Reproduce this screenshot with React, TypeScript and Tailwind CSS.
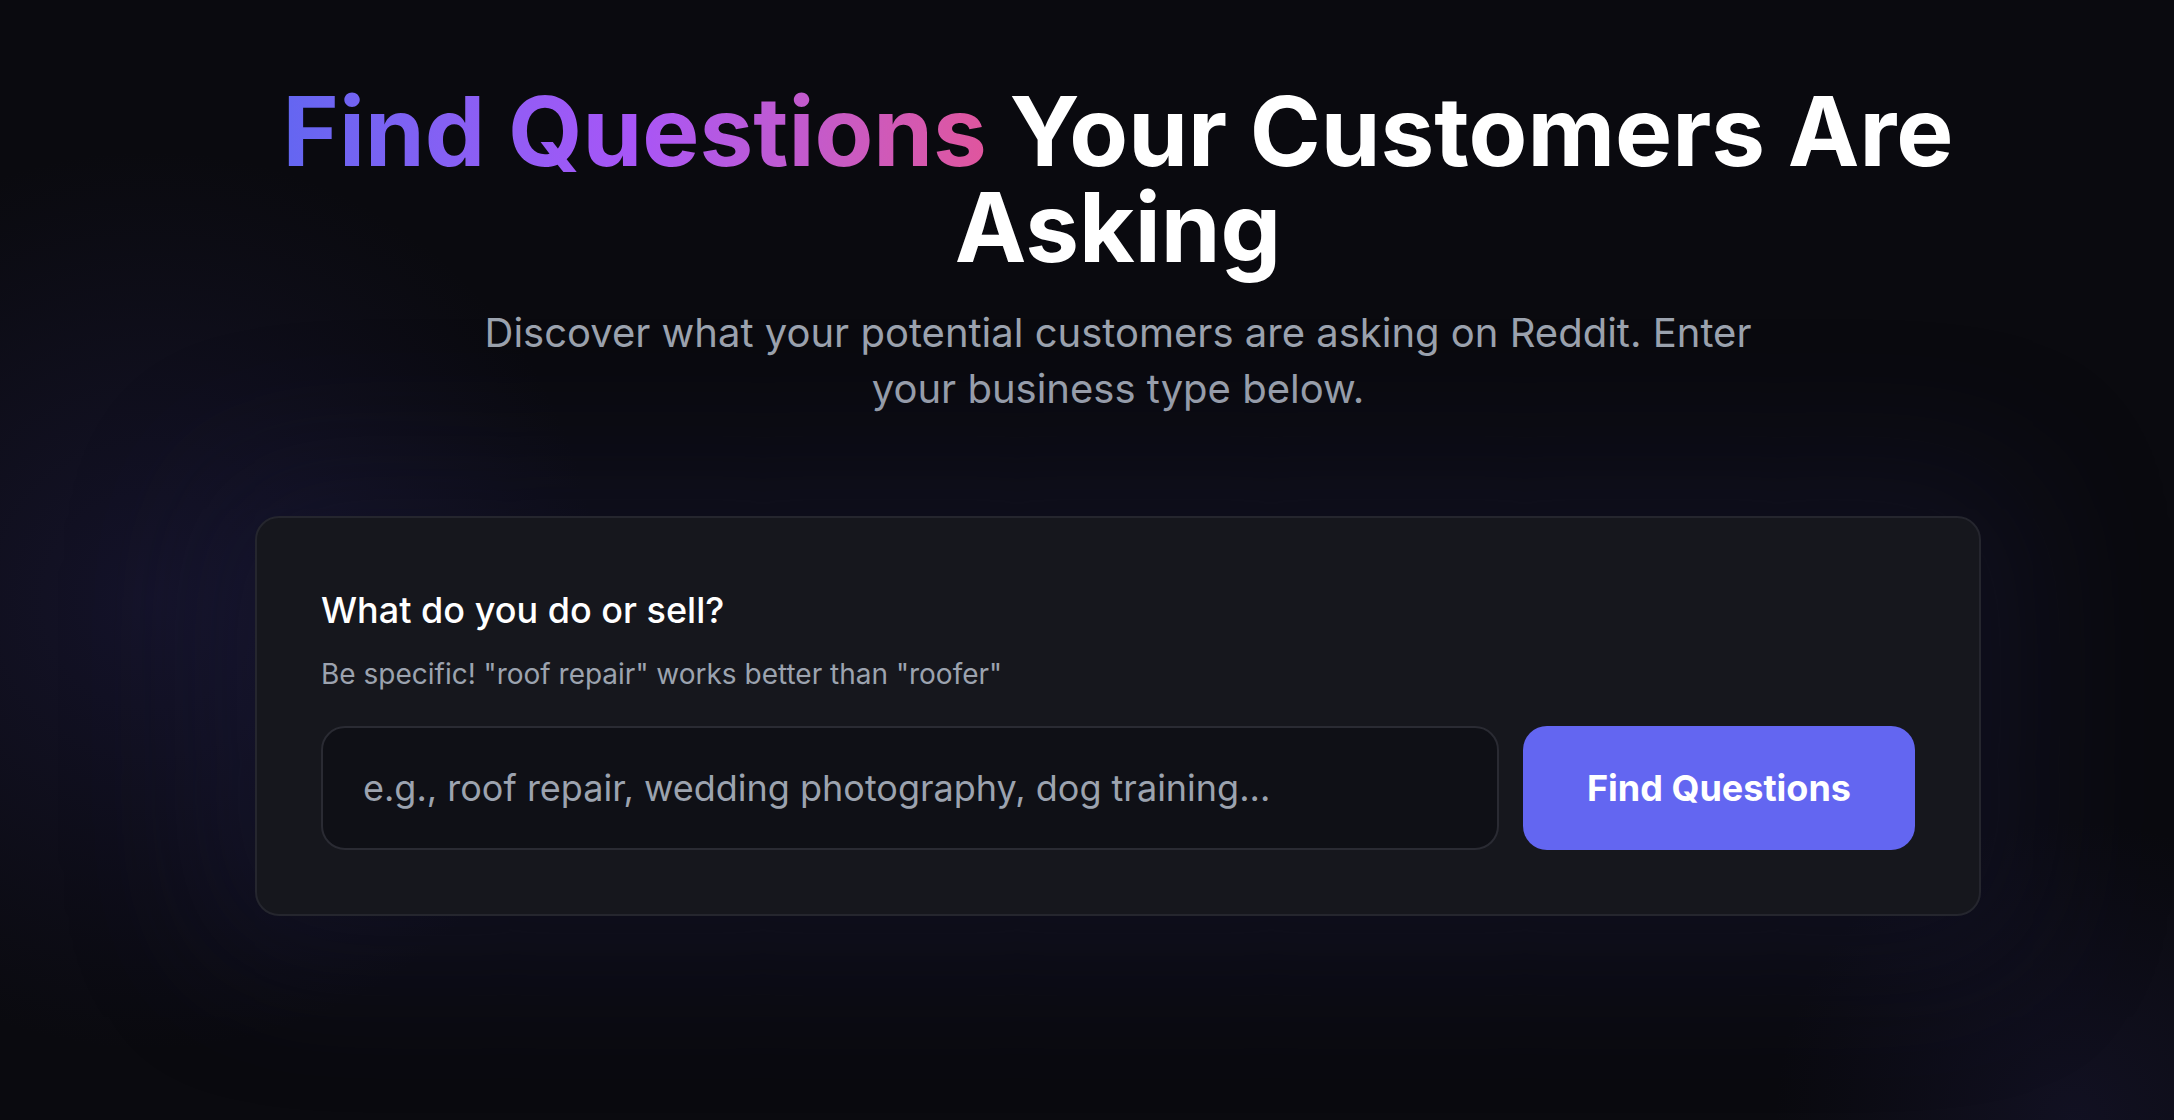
import React, { useState } from "react";

const App = () => {
  const [business, setBusiness] = useState("");

  return (
    <div
      className="relative min-h-screen w-full overflow-hidden bg-[#0a0a0f] text-white"
      style={{ fontFamily: "Inter, 'Noto Sans', sans-serif" }}
    >
      {/* background glows */}
      <div className="pointer-events-none absolute -left-[300px] top-[150px] h-[900px] w-[900px] rounded-full bg-[radial-gradient(closest-side,rgba(40,36,90,0.35),rgba(10,10,15,0))]" />
      <div className="pointer-events-none absolute -right-[200px] -bottom-[300px] h-[600px] w-[600px] rounded-full bg-[radial-gradient(closest-side,rgba(40,36,90,0.25),rgba(10,10,15,0))]" />

      <div className="relative flex flex-col items-center pl-[62px] pt-[83px]">
        <div className="flex w-full max-w-[1726px] flex-col items-center">
          {/* Hero */}
          <h1 className="text-center text-[96px] font-bold leading-none tracking-normal text-white">
            <span className="bg-gradient-to-r from-[#6366f1] via-[#a855f7] to-[#e0559d] bg-clip-text text-transparent">
              Find Questions
            </span>{" "}
            Your Customers Are Asking
          </h1>
          <p className="mt-[30px] max-w-[1344px] text-center text-[40px] leading-[56px] text-[#9ca3af]">
            Discover what your potential customers are asking on Reddit. Enter
            your business type below.
          </p>

          {/* Search card */}
          <div className="mt-[99px] w-full rounded-[24px] border-2 border-[#25262e] bg-[#16171d] p-[64px] shadow-[0_0_140px_50px_rgba(30,30,70,0.3)]">
            <label className="block text-[36px] font-medium leading-[56px] text-white">
              What do you do or sell?
            </label>
            <p className="mt-[16px] text-[28px] leading-[40px] text-[#9ca3af]">
              Be specific! "roof repair" works better than "roofer"
            </p>
            <div className="mt-[32px] flex gap-[24px]">
              <input
                value={business}
                onChange={(e) => setBusiness(e.target.value)}
                placeholder="e.g., roof repair, wedding photography, dog training..."
                className="min-w-0 flex-1 rounded-[24px] border-2 border-[#2a2b33] bg-[#0f1016] px-[40px] py-[32px] text-[36px] leading-[56px] text-white outline-none placeholder:text-[#9ca3af]"
              />
              <button className="rounded-[24px] bg-[#6366f1] px-[64px] text-[36px] font-bold leading-[56px] text-white">
                Find Questions
              </button>
            </div>
          </div>
        </div>
      </div>
    </div>
  );
};

export default App;
